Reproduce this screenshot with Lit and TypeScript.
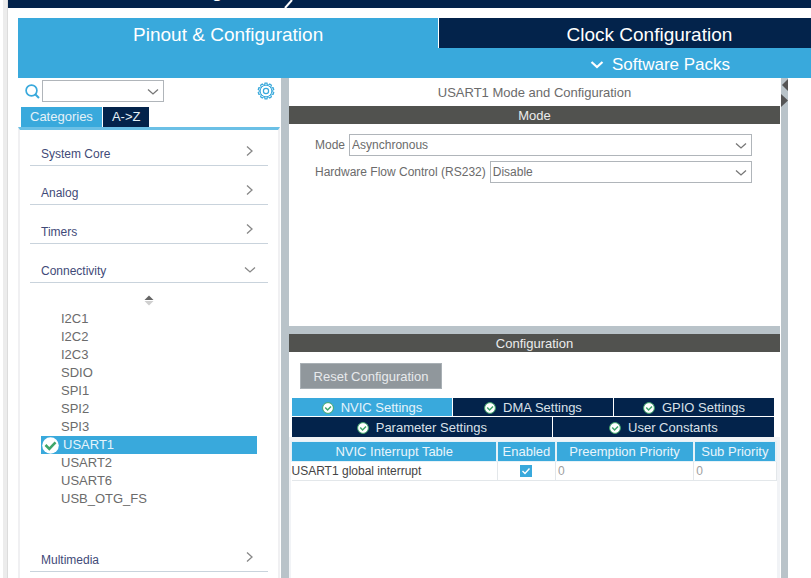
import { LitElement, html, css, svg } from "lit";
import { customElement, state } from "lit/decorators.js";
import { classMap } from "lit/directives/class-map.js";

const chevronDown = html`<svg class="chev" viewBox="0 0 12 8" width="12" height="8" aria-hidden="true">
  <path d="M1 1.5 L6 6 L11 1.5" fill="none" stroke="currentColor" stroke-width="1.3" />
</svg>`;

const chevronRight = html`<svg class="chev" viewBox="0 0 12 12" width="12" height="12" aria-hidden="true">
  <path d="M3 1.5 L8 6 L3 10.5" fill="none" stroke="currentColor" stroke-width="1.3" />
</svg>`;

const okBadge = html`<svg viewBox="0 0 12 12" width="12" height="12" aria-hidden="true">
  <circle cx="6" cy="6" r="5.4" fill="#fff" stroke="#3fa66a" stroke-width="1" />
  <path d="M3.2 5.4 L5.6 8 L9 4.4" fill="none" stroke="#3fa66a" stroke-width="1.5" />
</svg>`;

const teeth = Array.from({ length: 10 }, (_, i) => i * 36);

const gear = html`<svg viewBox="0 0 18 18" width="18" height="18" aria-hidden="true">
  ${teeth.map(
    (a) => svg`<path d="M7.6 3 L8 1.2 H10 L10.4 3" fill="none" stroke="#39a9dc" stroke-width="1.2" transform=${`rotate(${a} 9 9)`} />`
  )}
  <circle cx="9" cy="9" r="5.8" fill="none" stroke="#39a9dc" stroke-width="1" />
  <circle cx="9" cy="9" r="2.6" fill="none" stroke="#39a9dc" stroke-width="1.2" />
</svg>`;

@customElement("app-root")
export class AppRoot extends LitElement {
  @state() private peripheral = "USART1";

  private peripherals = [
    "I2C1", "I2C2", "I2C3", "SDIO", "SPI1", "SPI2", "SPI3",
    "USART1", "USART2", "USART6", "USB_OTG_FS",
  ];

  static styles = css`
    :host {
      display: flex;
      min-height: 100vh;
      overflow: hidden;
      background: #fff;
      color: #6b6b6b;
      font-family: "Liberation Sans", Arial, sans-serif;
      font-size: 12px;
      line-height: 18px;
    }
    * { box-sizing: border-box; }
    button, select, input {
      margin: 0;
      padding: 0;
      border: 0;
      border-radius: 0;
      background: none;
      color: inherit;
      font: inherit;
    }
    h1, h2 { margin: 0; font-weight: normal; font-size: inherit; }
    svg { display: block; flex: none; }
    .edge {
      flex: none;
      width: 5px;
      margin-left: 3px;
      background: #ececec;
      border-right: 1px solid #dcdcdc;
    }
    .window { flex: 1; min-width: 0; display: flex; flex-direction: column; }
    .crumbs {
      display: flex;
      align-items: flex-end;
      height: 8px;
      overflow: hidden;
      padding-left: 86px;
      background: #03234b;
      color: #fff;
      font-size: 17px;
      font-weight: bold;
    }
    .crumbs span { line-height: 30px; }
    .crumbs svg { margin-left: 4px; }
    .page { flex: 1; margin: 10px 0 0 10px; display: flex; flex-direction: column; }
    .top-tabs {
      display: grid;
      grid-template-columns: 53% 53%;
      gap: 1px;
      overflow: hidden;
      background: #fff;
    }
    .top-tabs button {
      height: 30px;
      padding-top: 3px;
      font-size: 19px;
      color: #fff;
      background: #03234b;
    }
    .top-tabs .active { background: #39a9dc; }
    .packs { height: 30px; padding-left: 72%; background: #39a9dc; }
    .packs button {
      display: flex;
      align-items: center;
      gap: 8px;
      height: 30px;
      padding: 3px 0 0 1px;
      font-size: 17px;
      color: #fff;
      white-space: nowrap;
    }
    .body { flex: 1; display: flex; }
    .sidebar { flex: none; width: 263px; display: flex; flex-direction: column; }
    .search { display: flex; align-items: center; gap: 2px; height: 26px; padding: 0 6px 0 7px; }
    .search .pick { flex: none; width: 122px; }
    .search .config { margin-left: auto; }
    .pick { position: relative; display: flex; height: 22px; color: #6b6b6b; }
    .pick select {
      flex: 1;
      min-width: 0;
      height: 22px;
      padding: 0 24px 0 2px;
      border: 1px solid #b0b5ba;
      background: #fff;
      appearance: none;
    }
    .pick .chev { position: absolute; right: 5px; top: 8px; color: #777; pointer-events: none; }
    .cat-tabs { display: flex; gap: 1px; margin: 3px 2px 0 3px; font-size: 13px; }
    .cat-tabs button { height: 20px; padding: 0 9px; color: #e4f1f8; background: #03234b; }
    .cat-tabs .active { background: #39a9dc; }
    .tree {
      flex: 1;
      margin-right: 1px;
      padding: 0 10px;
      border: 2px solid #f0f0f2;
      border-top: 3px solid #6bc0e6;
      border-bottom: 0;
    }
    .section {
      display: flex;
      align-items: flex-end;
      justify-content: space-between;
      width: 100%;
      height: 39px;
      padding: 0 12px 2px 11px;
      border-bottom: 1px solid #c9d3dc;
      color: #3f4a78;
    }
    .section.first { height: 36px; }
    .section .chev { margin-bottom: 6px; color: #888; }
    .sorter { display: block; margin: 12px auto 4px; }
    .list { margin: 0 11px 25px 11px; padding: 0; list-style: none; }
    .list button {
      display: flex;
      align-items: center;
      gap: 4px;
      width: 100%;
      height: 18px;
      padding-left: 20px;
      font-size: 13px;
      text-align: left;
    }
    .list .selected { padding-left: 1px; background: #39a9dc; color: #e6f4fb; }
    .splitter { flex: none; width: 8px; background: #b9c3c9; }
    .splitter.right { width: 7px; }
    .splitter svg { margin-top: 1px; }
    .main { flex: 1; min-width: 0; margin-right: 1px; display: flex; flex-direction: column; }
    .gutter { flex: none; width: 23px; }
    .title { height: 28px; padding-top: 6px; text-align: center; font-size: 13px; }
    .bar { height: 18px; padding-top: 1px; text-align: center; color: #ececec; background: #51524f; font-size: 13px; }
    .mode { min-height: 202px; padding: 10px 28px 0 26px; display: flex; flex-direction: column; gap: 5px; }
    .field { display: flex; align-items: center; gap: 4px; }
    .field .pick { flex: 1; }
    .hsplit { height: 8px; background: #b9c3c9; }
    .reset {
      align-self: flex-start;
      margin: 11px 0 9px 11px;
      padding-top: 2px;
      width: 142px;
      height: 26px;
      border: 1px solid #a9b0b5;
      background: #90979c;
      color: #e8eaec;
      font-size: 13px;
    }
    .settings { margin: 0 6px 0 3px; display: flex; flex-direction: column; gap: 1px; }
    .row3, .row2 { display: grid; gap: 1px; }
    .row3 { grid-template-columns: 1fr 1fr 1fr; }
    .row2 { grid-template-columns: 54fr 46fr; }
    .settings button {
      display: flex;
      align-items: center;
      justify-content: center;
      gap: 7px;
      height: 18px;
      padding-top: 1px;
      background: #03234b;
      color: #d9e0e8;
      font-size: 13px;
    }
    .row2 button { height: 20px; }
    .settings .active { background: #39a9dc; color: #e4f3fb; }
    .grid { padding: 4px 3px 0 2px; background: #f1f3f6; flex: 1; }
    .sheet { height: 100%; background: #fff; }
    table { width: 100%; border-collapse: collapse; table-layout: fixed; }
    th, td { padding: 0 2px; }
    th {
      height: 20px;
      border: 1px solid #e6f2f8;
      border-right-width: 2px;
      background: #39a9dc;
      color: #e9f5fb;
      font-weight: normal;
      font-size: 13px;
      white-space: nowrap;
    }
    td { height: 19px; border: solid #e3e7ea; border-width: 0 1px 1px 0; color: #a0a0a0; }
    td.name { padding: 0; color: #444; white-space: nowrap; }
    .c1 { width: 42.5%; }
    .c2 { width: 12%; }
    .c4 { width: 17%; }
    .tick { position: relative; display: flex; justify-content: center; }
    .tick input { width: 12px; height: 12px; appearance: none; background: #fff; border: 1px solid #39a9dc; }
    .tick input:checked { background: #39a9dc; }
    .tick svg { position: absolute; top: 0; pointer-events: none; }
  `;

  private section(name: string, open = false, first = false) {
    return html`<button class=${classMap({ section: true, first })} aria-expanded=${open}>
      <span>${name}</span>${open ? chevronDown : chevronRight}
    </button>`;
  }

  render() {
    return html`
      <div class="edge"></div>
      <div class="window">
        <header class="crumbs">
          <span>Pinout &amp; Configuration</span>
          <svg viewBox="0 0 10 8" width="10" height="8" aria-hidden="true">
            <path d="M1 8 L8 0" stroke="#fff" stroke-width="2" />
          </svg>
        </header>
        <div class="page">
          <nav class="top-tabs">
            <button class="active">Pinout &amp; Configuration</button>
            <button>Clock Configuration</button>
          </nav>
          <div class="packs">
            <button>
              <svg viewBox="0 0 14 10" width="14" height="10" aria-hidden="true">
                <path d="M1.5 2 L7 7 L12.5 2" fill="none" stroke="#fff" stroke-width="2.2" />
              </svg>
              Software Packs
            </button>
          </div>
          <div class="body">
            <aside class="sidebar">
              <div class="search">
                <svg viewBox="0 0 15 15" width="15" height="15" aria-hidden="true">
                  <circle cx="6.5" cy="6.5" r="5.4" fill="none" stroke="#39a9dc" stroke-width="1.7" />
                  <path d="M10.2 10.2 L14 14" stroke="#39a9dc" stroke-width="2" />
                </svg>
                <span class="pick">
                  <select aria-label="Search peripherals"><option></option></select>${chevronDown}
                </span>
                <button class="config" aria-label="Settings">${gear}</button>
              </div>
              <div class="cat-tabs">
                <button class="active">Categories</button>
                <button>A-&gt;Z</button>
              </div>
              <div class="tree">
                ${this.section("System Core", false, true)}
                ${this.section("Analog")}
                ${this.section("Timers")}
                ${this.section("Connectivity", true)}
                <button class="sorter" aria-label="Sort">
                  <svg viewBox="0 0 10 11" width="10" height="11" aria-hidden="true">
                    <path d="M0.5 5 L5 0.5 L9.5 5 Z" fill="#666" />
                    <path d="M0.5 6 L5 10.5 L9.5 6 Z" fill="#cfcfcf" />
                  </svg>
                </button>
                <ul class="list">
                  ${this.peripherals.map((p) => {
                    const selected = p === this.peripheral;
                    return html`<li>
                      <button class=${classMap({ selected })} @click=${() => (this.peripheral = p)}>
                        ${selected
                          ? html`<svg viewBox="0 0 17 17" width="17" height="17" aria-hidden="true">
                              <circle cx="8.5" cy="8.5" r="8.3" fill="#fff" />
                              <path d="M3.5 8 L7.3 11.8 L13.5 5.3" fill="none" stroke="#3fa66a" stroke-width="2.6" />
                            </svg>`
                          : ""}
                        <span>${p}</span>
                      </button>
                    </li>`;
                  })}
                </ul>
                ${this.section("Multimedia")}
              </div>
            </aside>
            <div class="splitter"></div>
            <main class="main">
              <h1 class="title">USART1 Mode and Configuration</h1>
              <h2 class="bar">Mode</h2>
              <section class="mode">
                <div class="field">
                  <label for="mode">Mode</label>
                  <span class="pick">
                    <select id="mode"><option>Asynchronous</option></select>${chevronDown}
                  </span>
                </div>
                <div class="field">
                  <label for="flow">Hardware Flow Control (RS232)</label>
                  <span class="pick">
                    <select id="flow"><option>Disable</option></select>${chevronDown}
                  </span>
                </div>
              </section>
              <div class="hsplit"></div>
              <h2 class="bar">Configuration</h2>
              <button class="reset">Reset Configuration</button>
              <nav class="settings">
                <div class="row3">
                  <button class="active">${okBadge}NVIC Settings</button>
                  <button>${okBadge}DMA Settings</button>
                  <button>${okBadge}GPIO Settings</button>
                </div>
                <div class="row2">
                  <button>${okBadge}Parameter Settings</button>
                  <button>${okBadge}User Constants</button>
                </div>
              </nav>
              <div class="grid">
                <div class="sheet">
                  <table>
                    <thead>
                      <tr>
                        <th class="c1">NVIC Interrupt Table</th>
                        <th class="c2">Enabled</th>
                        <th>Preemption Priority</th>
                        <th class="c4">Sub Priority</th>
                      </tr>
                    </thead>
                    <tbody>
                      <tr>
                        <td class="name">USART1 global interrupt</td>
                        <td>
                          <label class="tick">
                            <input type="checkbox" checked aria-label="USART1 global interrupt enabled" />
                            <svg viewBox="0 0 12 12" width="12" height="12" aria-hidden="true">
                              <path d="M2.5 6 L5 8.5 L9.5 3.5" fill="none" stroke="#fff" stroke-width="1.4" />
                            </svg>
                          </label>
                        </td>
                        <td>0</td>
                        <td>0</td>
                      </tr>
                    </tbody>
                  </table>
                </div>
              </div>
            </main>
            <div class="splitter right">
              <svg viewBox="0 0 7 28" width="7" height="28" aria-hidden="true">
                <path d="M7 0 V12 L1 6 Z" fill="#555" />
                <path d="M0 15 V28 L7 21.5 Z" fill="#555" />
              </svg>
            </div>
            <div class="gutter"></div>
          </div>
        </div>
      </div>
    `;
  }
}
